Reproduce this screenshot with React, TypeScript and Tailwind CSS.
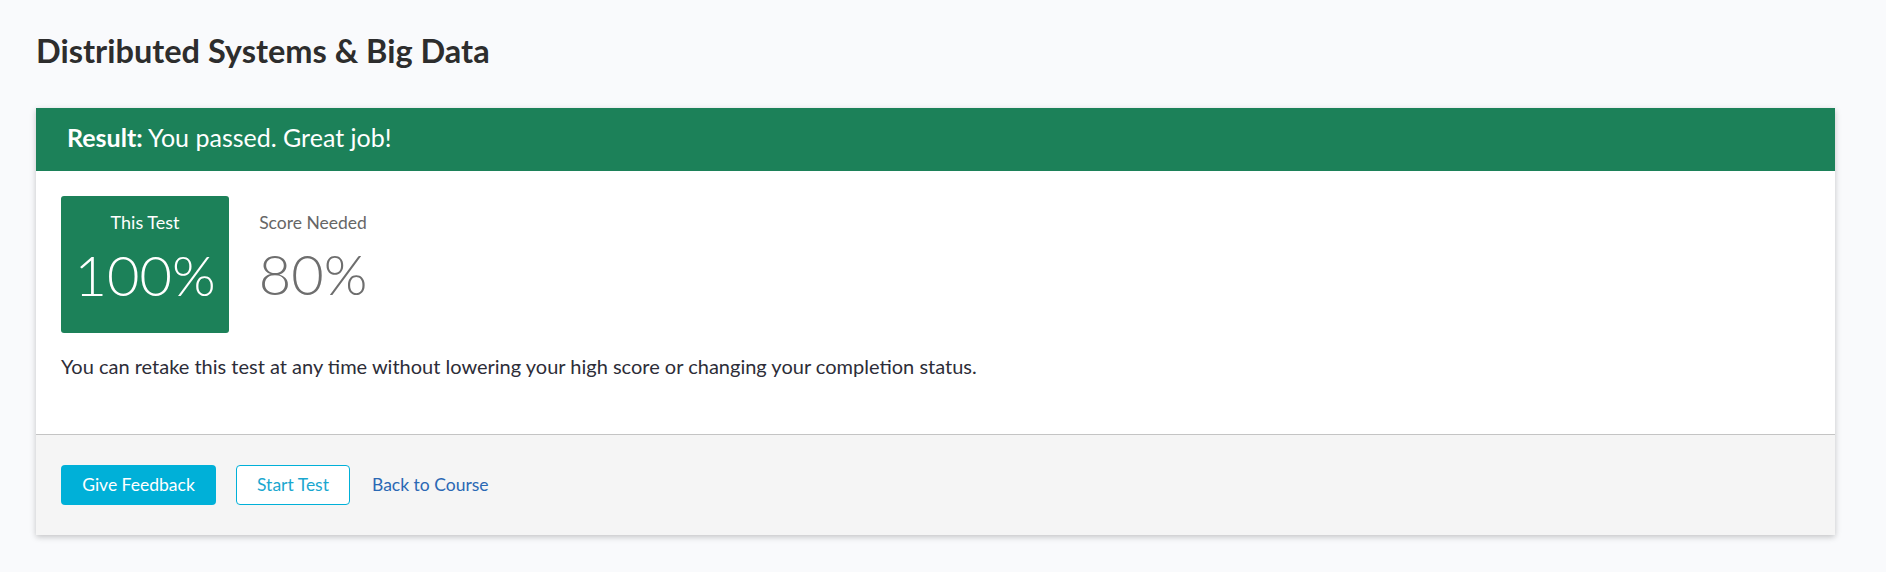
import React from "react";

export default function App() {
  return (
    <div
      className="min-h-screen w-full bg-[#f9fafc] pl-[36px] pr-[51px] pt-[31px]"
      style={{ fontFamily: "Lato, 'Noto Sans', sans-serif" }}
    >
      <h1 className="text-[32.5px] leading-[1.2] font-bold text-[#2d2d2d]">
        Distributed Systems &amp; Big Data
      </h1>
      <div className="mt-[38px] bg-white shadow-[0_2px_6px_rgba(0,0,0,0.22)]">
        <div className="h-[63px] bg-[#1c8159] pl-[31px] pt-[14px] text-[25px] leading-[1.2] text-white">
          <span className="font-bold">Result:</span> You passed. Great job!
        </div>
        <div className="px-[25px] pt-[25px] pb-[56px]">
          <div className="flex">
            <div className="flex h-[137px] w-[168px] flex-col items-center rounded-[3px] bg-[#1c8159] pt-[16px] text-white">
              <div className="text-[18px] leading-[1.2]">This Test</div>
              <div className="mt-[7px] text-[56px] leading-[1.2] font-light">100%</div>
            </div>
            <div className="flex h-[137px] w-[168px] flex-col items-center pt-[16px] text-[#666666]">
              <div className="text-[17.5px] leading-[1.2]">Score Needed</div>
              <div className="mt-[7px] text-[56px] leading-[1.2] font-light text-[#6e6e6e]">80%</div>
            </div>
          </div>
          <p className="mt-[21px] text-[20px] leading-[1.2] text-[#2d2d38]">
            You can retake this test at any time without lowering your high score or changing your completion status.
          </p>
        </div>
        <div className="flex items-center border-t border-[#c4c4c4] bg-[#f5f5f5] px-[25px] pt-[30px] pb-[30px]">
          <button className="h-[40px] w-[155px] rounded-[4px] bg-[#00b0d8] text-[17.5px] text-white">
            Give Feedback
          </button>
          <button className="ml-[20px] h-[40px] w-[114px] rounded-[4px] border border-[#00b0d8] bg-white text-[17.5px] text-[#1aa7cf]">
            Start Test
          </button>
          <a className="ml-[22px] text-[17.5px] text-[#2a68b4]" href="#">
            Back to Course
          </a>
        </div>
      </div>
    </div>
  );
}
